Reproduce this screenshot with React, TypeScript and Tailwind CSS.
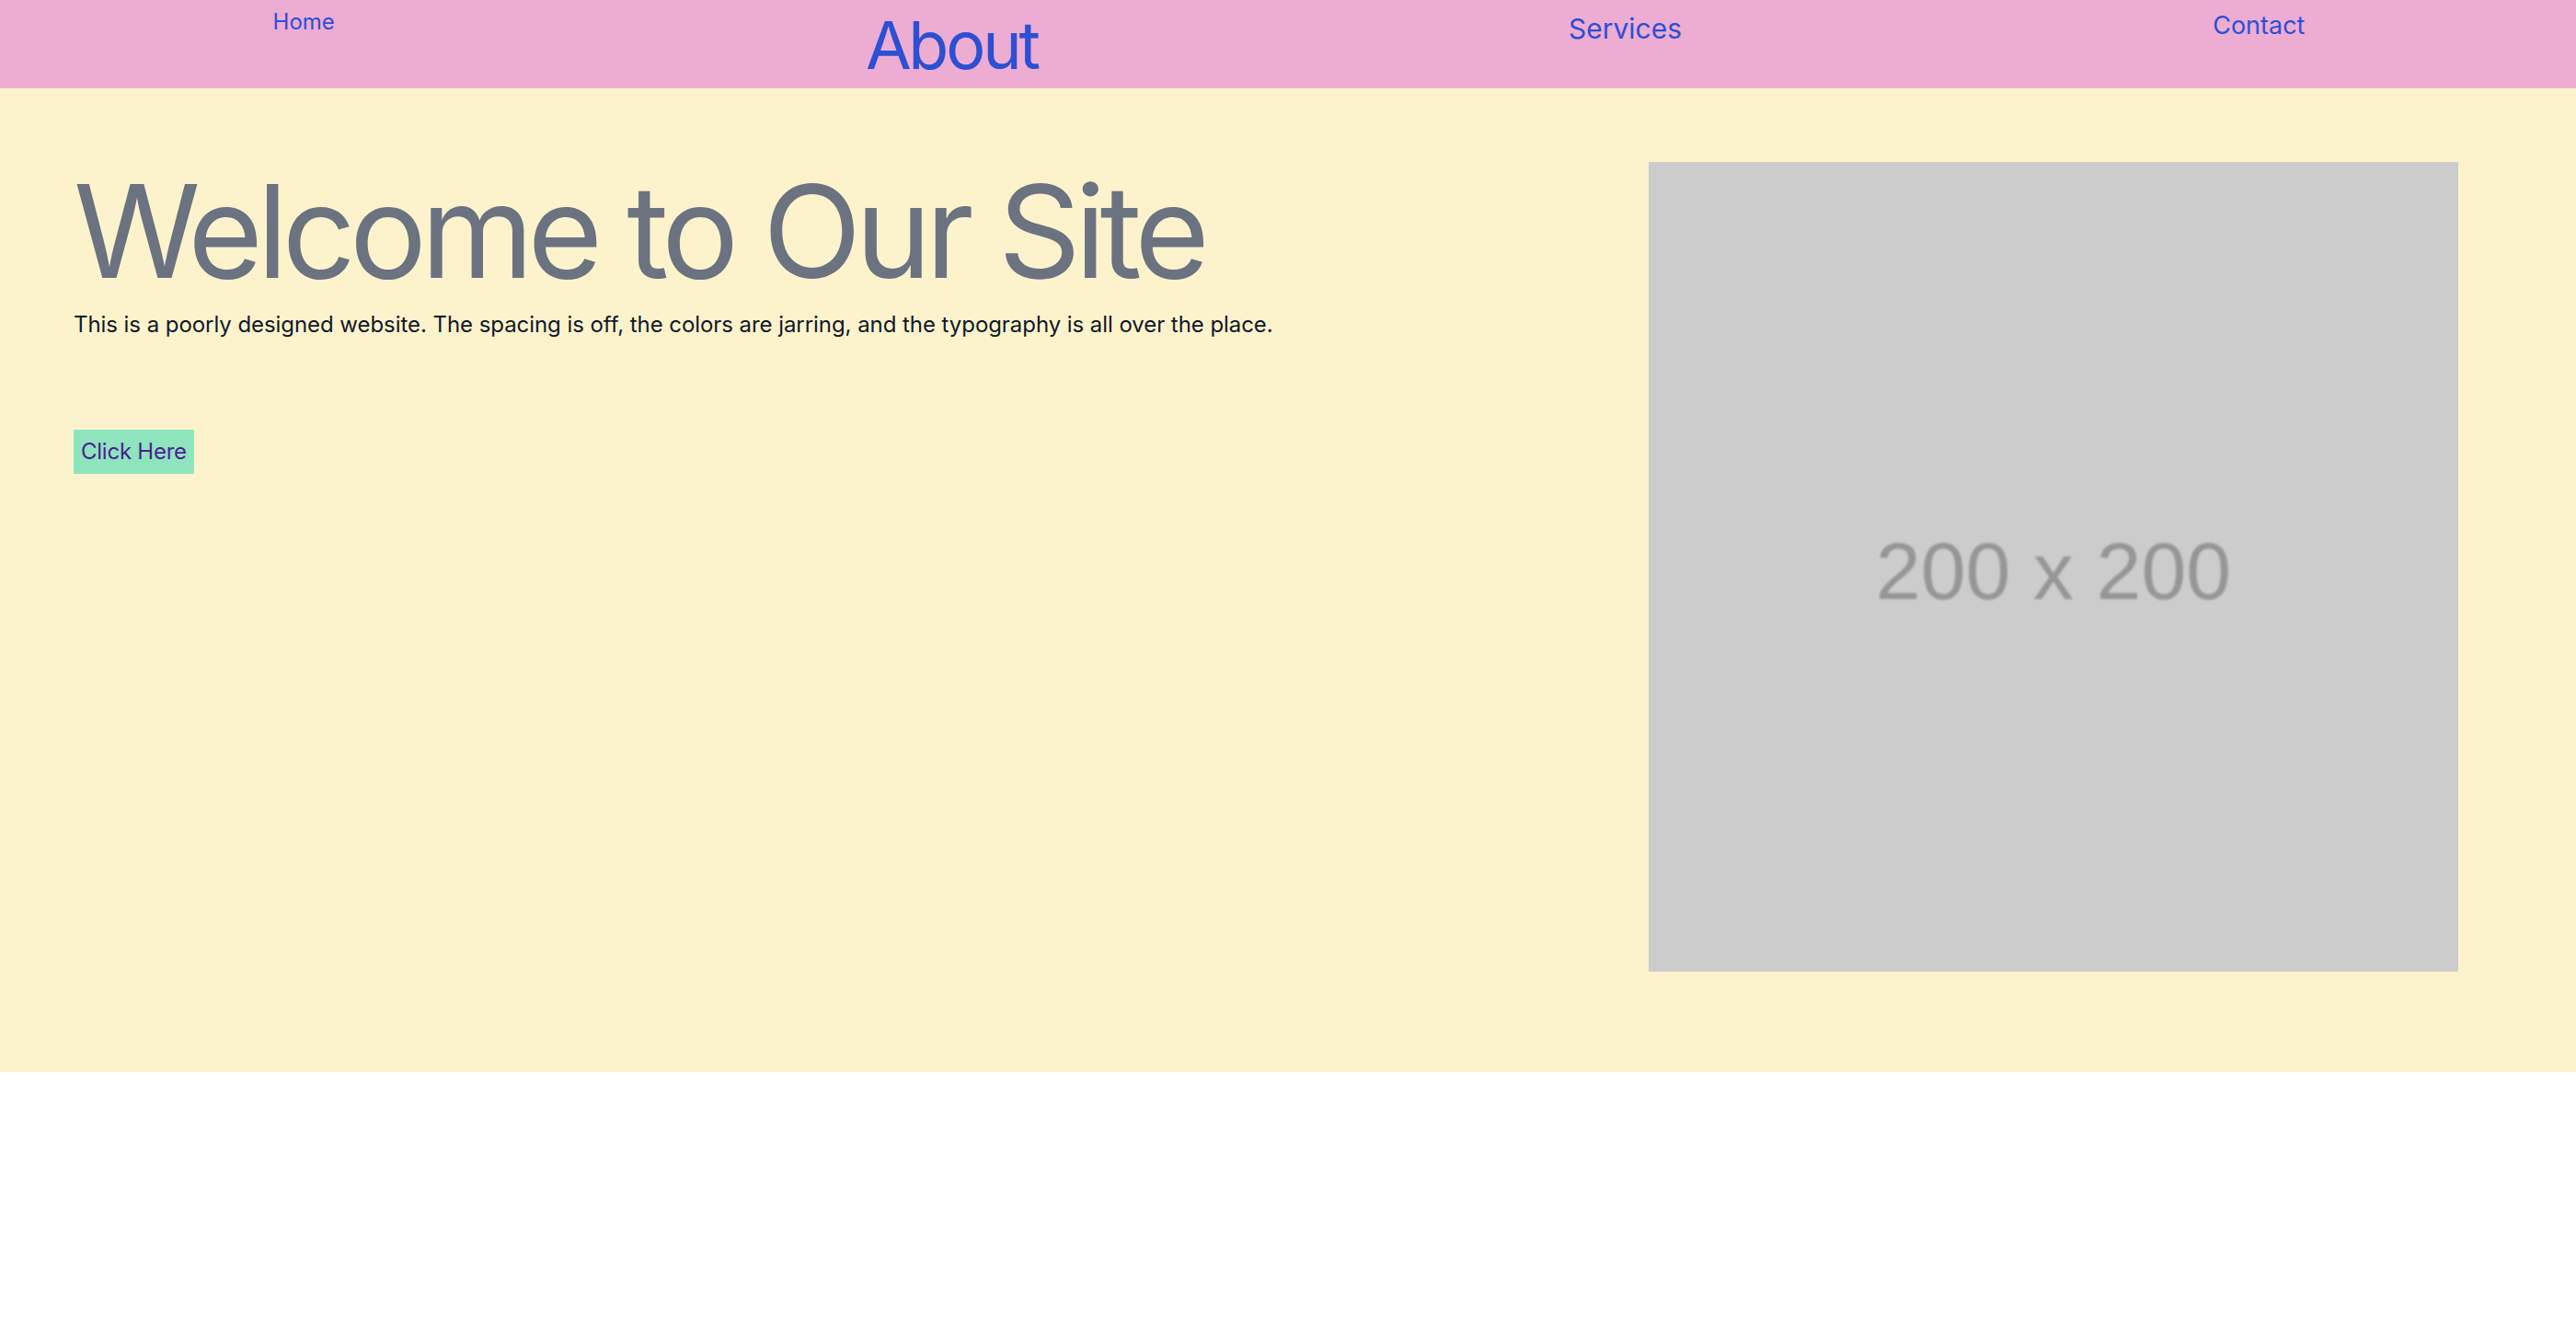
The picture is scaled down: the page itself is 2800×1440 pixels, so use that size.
import React from "react";

const App = () => {
  return (
    <div className="w-full min-h-screen bg-white font-['Inter',sans-serif]">
      {/* --- NAV (every link a different size, on purpose) --- */}
      <nav className="h-[96px] w-full bg-[#edacd2] flex items-start justify-around text-[#2c4fd4]">
        <a href="#" className="ml-[8px] mt-[12px] text-[24px] leading-none">Home</a>
        <a href="#" className="mt-[13px] text-[72px] leading-none tracking-[-0.045em]">About</a>
        <a href="#" className="mt-[16px] text-[30px] leading-none">Services</a>
        <a href="#" className="mr-[6px] mt-[14px] text-[27px] leading-none">Contact</a>
      </nav>

      {/* --- HERO --- */}
      <section className="w-full bg-[#fcf3cd] flex items-start justify-between pl-[80px] pr-[128px] pt-[80px] pb-[109px]">
        <div className="flex flex-col items-start">
          <h1 className="mt-[5px] text-[140px] leading-none text-[#6b7280] tracking-[-0.047em]">Welcome to Our Site</h1>
          <p className="mt-[14px] text-[24px] leading-[36px] text-[#111827] tracking-[-0.0025em]">
            This is a poorly designed website. The spacing is off, the colors are jarring, and the typography is all over the place.
          </p>
          <button className="mt-[96px] px-[8px] py-[8px] bg-[#8ee5bd] text-[#4c1d95] text-[24px] leading-[32px] tracking-[-0.01em]">
            Click Here
          </button>
        </div>

        {/* placeholder picture */}
        <div className="w-[880px] h-[880px] shrink-0 bg-[#cccccc] flex items-center justify-center">
          <span className="mt-[10px] font-['Liberation_Sans',Arial,sans-serif] text-[88px] text-[#969696] blur-[1px]">200 x 200</span>
        </div>
      </section>
    </div>
  );
};

export default App;
